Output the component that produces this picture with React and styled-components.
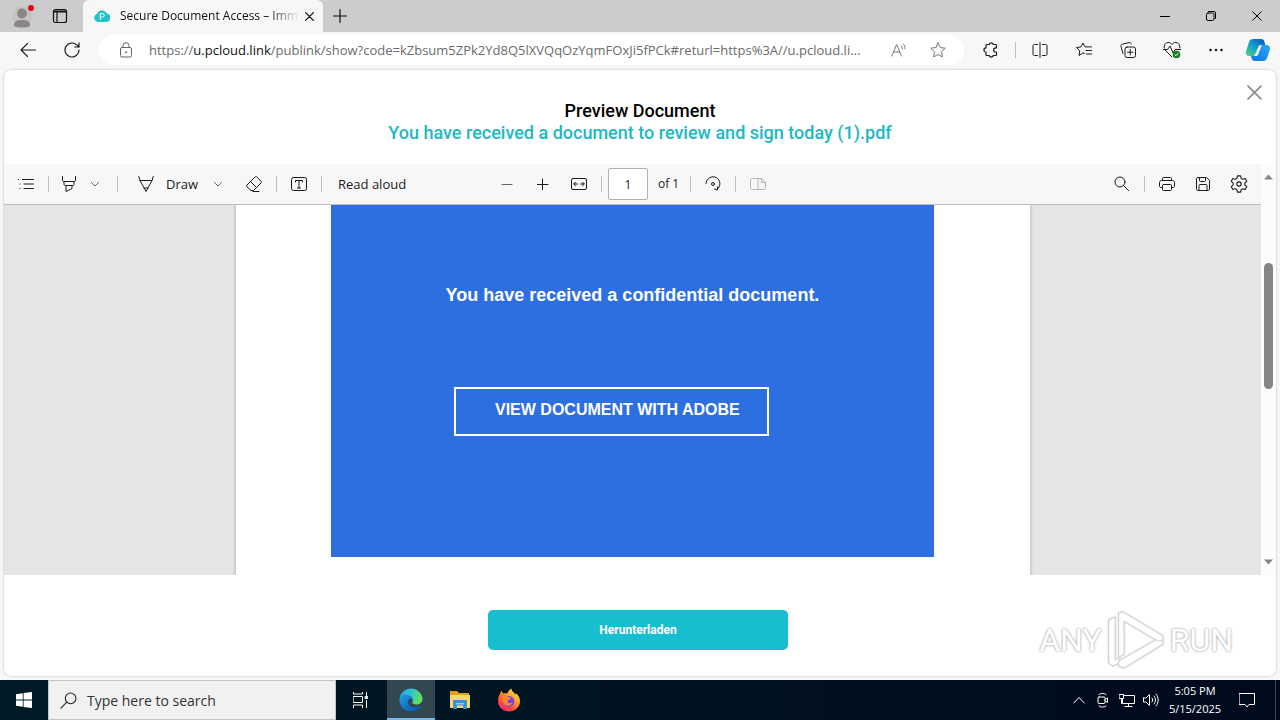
import React, { useState } from 'react';
import styled, { createGlobalStyle } from 'styled-components';

const ui = '"Open Sans", "Noto Sans", sans-serif';

const GlobalStyle = createGlobalStyle`
  * {
    box-sizing: border-box;
  }

  body {
    margin: 0;
    font-family: ${ui};
  }

  button, input {
    font-family: inherit;
    color: inherit;
    margin: 0;
  }

  button {
    border: 0;
    padding: 0;
    background: none;
  }
`;

const Screen = styled.div`
  min-height: 100vh;
  display: flex;
  flex-direction: column;
  background: #f7f7f7;
  color: #1b1b1b;
`;

const TitleBar = styled.header`
  height: 32px;
  display: flex;
  background: #cccccc;
`;

const IconButton = styled.button`
  width: ${(props) => props.$w || 32}px;
  height: ${(props) => props.$h || 32}px;
  flex: none;
  display: flex;
  align-items: center;
  justify-content: center;
`;

const Tools = styled.div`
  width: 83px;
  padding-left: 3px;
  display: flex;
`;

const Tab = styled.div`
  width: 240px;
  display: flex;
  align-items: center;
  padding: 0 10px 0 11px;
  background: #f7f7f7;
  border-radius: 6px 6px 0 0;
`;

const TabTitle = styled.span`
  flex: 1;
  margin-left: 10px;
  white-space: nowrap;
  font-size: 12px;
  line-height: 16px;
  color: #111111;
  mask-image: linear-gradient(90deg, #000 80%, transparent 97%);
`;

const WindowControls = styled.div`
  margin-left: auto;
  display: flex;
`;

const NavBar = styled.nav`
  height: 38px;
  padding: 0 2px 2px 6px;
  display: flex;
  align-items: center;
`;

const Address = styled.div`
  flex: 1;
  min-width: 0;
  height: 30px;
  margin: 0 5px;
  padding: 0 6px 0 19px;
  display: flex;
  align-items: center;
  border-radius: 15px;
  background: #ffffff;
`;

const Url = styled.a`
  flex: 1;
  min-width: 0;
  margin-left: 15px;
  overflow: hidden;
  white-space: nowrap;
  text-overflow: ellipsis;
  font-size: 13px;
  line-height: 20px;
  color: #6b6b6b;
  text-decoration: none;
`;

const Host = styled.span`
  color: #111111;
`;

const Divider = styled.span`
  width: 1px;
  height: 16px;
  flex: none;
  margin: 0 ${(props) => props.$after ?? 6}px 0 ${(props) => props.$before ?? 6}px;
  background: #bdbdbd;
`;

const Card = styled.main`
  flex: 1;
  margin: 0 4px 4px;
  display: flex;
  flex-direction: column;
  position: relative;
  background: #ffffff;
  border-radius: 8px;
  box-shadow: 0 0 2px 1px #dcdcdc;
`;

const CardHeader = styled.div`
  padding: 30px 60px 20px;
  text-align: center;
  font-family: Roboto, sans-serif;
  font-weight: 500;
`;

const Title = styled.h1`
  margin: 0;
  font-size: 18px;
  line-height: 22px;
  font-weight: inherit;
  color: ${(props) => props.$accent ? '#20b8c5' : '#000000'};
`;

const CloseButton = styled(IconButton)`
  position: absolute;
  top: 6px;
  right: 6px;
`;

const Viewer = styled.section`
  flex: 1;
  display: flex;
`;

const Pdf = styled.div`
  flex: 1;
  min-width: 0;
  display: flex;
  flex-direction: column;
`;

const PdfToolbar = styled.div`
  height: 41px;
  padding: 0 6px;
  display: grid;
  grid-template-columns: 1fr auto 1fr;
  align-items: center;
  background: #f7f7f7;
  border-bottom: 1px solid #bcbcbc;
  font-size: 13px;
  line-height: 20px;
`;

const Group = styled.div`
  display: flex;
  align-items: center;
  justify-content: ${(props) => props.$end ? 'flex-end' : 'flex-start'};
`;

const Spaced = styled(Group)`
  gap: 4px;
`;

const DrawTools = styled(Group)`
  gap: 8px;
`;

const TextButton = styled.button`
  display: flex;
  align-items: center;
  white-space: nowrap;
  font-size: 13px;
  line-height: 20px;
`;

const ReadAloud = styled(TextButton)`
  padding-left: 10px;
`;

const DrawLabel = styled.span`
  width: 44px;
  padding-left: 4px;
  text-align: left;
`;

const PageInput = styled.input`
  width: 40px;
  height: 32px;
  padding: 0;
  text-align: center;
  border: 1px solid #b0b0b0;
  border-radius: 2px;
  background: #ffffff;
  font-size: 12px;
`;

const PageCount = styled.span`
  width: 36px;
  padding-left: 10px;
  white-space: nowrap;
  font-size: 12px;
`;

const Canvas = styled.div`
  flex: 1;
  display: flex;
  justify-content: center;
  background: #e5e5e5;
`;

const Page = styled.div`
  width: 794px;
  display: flex;
  justify-content: center;
  align-items: flex-start;
  padding-bottom: 18px;
  background: #ffffff;
  box-shadow: 0 0 3px 1px #bbbbbb;
  clip-path: inset(0 -4px);
`;

const Notice = styled.div`
  width: 603px;
  height: 352px;
  padding-top: 78px;
  background: #2d6fe1;
  color: #ffffff;
  font-family: "Liberation Sans", Arial, sans-serif;
  font-weight: 700;
`;

const NoticeText = styled.p`
  margin: 0 0 80px;
  text-align: center;
  font-size: 18px;
  line-height: 24px;
`;

const ViewButton = styled.button`
  width: 315px;
  height: 49px;
  margin-left: 123px;
  padding: 0 0 4px 39px;
  text-align: left;
  border: 2px solid #ffffff;
  font-size: 16px;
  font-weight: 700;
`;

const Scrollbar = styled.div`
  width: 15px;
  padding: 9px 0;
  display: flex;
  flex-direction: column;
  align-items: center;
  background: #fcfcfc;
`;

const Track = styled.div`
  flex: 1;
  width: 9px;
  margin: 2px 0;
  display: grid;
  grid-template-rows: 79fr 127fr 167fr;
`;

const Thumb = styled.div`
  grid-row: 2;
  border-radius: 5px;
  background: #858585;
`;

const CardFooter = styled.div`
  padding: 35px 4px 26px 0;
  display: flex;
  justify-content: center;
`;

const DownloadButton = styled.button`
  width: 300px;
  height: 40px;
  border-radius: 5px;
  background: #17bed0;
  color: #ffffff;
  font-family: Roboto, sans-serif;
  font-size: 12px;
  font-weight: 700;
`;

const Watermark = styled.div`
  position: absolute;
  right: 43px;
  bottom: 4px;
  display: flex;
  align-items: center;
  gap: 4px;
  color: #ffffff;
  font-family: Roboto, sans-serif;
  font-size: 32px;
  line-height: 64px;
  text-shadow: 0 0 2px #a8a8a8, 0 0 3px #bdbdbd;
`;

const Taskbar = styled.footer`
  height: 40px;
  display: flex;
  background: linear-gradient(90deg, #001b25, #000a1c);
  color: #ffffff;
`;

const TaskSearch = styled.label`
  width: 288px;
  height: 40px;
  display: flex;
  align-items: center;
  padding-left: 11px;
  border: 1px solid #c4c4c4;
  background: #f1f1f1;
  color: #222222;
`;

const SearchInput = styled.input`
  flex: 1;
  min-width: 0;
  margin-left: 10px;
  padding: 0;
  border: 0;
  background: none;
  font-size: 14px;

  &::placeholder {
    color: #333333;
    opacity: 1;
  }
`;

const Apps = styled.div`
  display: flex;
  gap: 1px;
`;

const AppButton = styled(IconButton)`
  background: ${(props) => props.$active ? '#32474f' : 'none'};
  box-shadow: ${(props) => props.$active ? 'inset 0 -2px #76b9ed' : 'none'};
`;

const Tray = styled.div`
  margin-left: auto;
  display: flex;
`;

const Clock = styled.time`
  width: 64px;
  padding-top: 2px;
  text-align: center;
  font-size: 11px;
  line-height: 18px;
`;

const ShowDesktop = styled.button`
  width: 5px;
  margin-left: 8px;
  border-left: 1px solid #3c4653;
`;

const Svg = styled.svg`
  flex: none;
  display: block;
  fill: none;
  stroke: currentColor;
  stroke-linecap: round;
  stroke-linejoin: round;
`;

const Icon = ({ size = 16, box = 16, color, line = 1, children }) => (
  <Svg width={size} height={size} viewBox={`0 0 ${box} ${box}`} color={color} strokeWidth={line} aria-hidden="true">
    {children}
  </Svg>
);

const Close = ({ size, color, line }) => (
  <Icon size={size} box={10} color={color} line={line}><path d="M.7.7l8.6 8.6M9.3.7L.7 9.3" /></Icon>
);

const Chevron = () => (
  <Icon size={8} box={8} color="#666"><path d="M.5 2.5L4 6l3.5-3.5" /></Icon>
);

const starPath = 'M8 .8l2.2 4.7 5 .7-3.7 3.6.9 5.1L8 12.5l-4.4 2.4.9-5.1L.8 6.2l5-.7z';

const Magnifier = ({ size, flip }) => (
  <Icon size={size}>{flip
    ? <><circle cx="10" cy="6" r="5" /><path d="M6.4 9.6L.8 15.2" /></>
    : <><circle cx="6" cy="6" r="5" /><path d="M9.700 9.700l5 5" /></>}
  </Icon>
);

const ProfileIcon = () => (
  <Icon size={24} box={24}>
    <g stroke="none">
      <circle cx="12" cy="12" r="10" fill="#c6c3c2" />
      <circle cx="12" cy="9.500" r="5" fill="#8b8786" />
      <path d="M4 22c-.5-5 3-6 8-6s8.500 1 8 6c-3 2-13 2-16 0z" fill="#8b8786" />
      <circle cx="21" cy="4" r="3" fill="#e60012" />
    </g>
  </Icon>
);

const CloudIcon = () => (
  <Icon size={16}>
    <path d="M4 13.500a3.700 3.700 0 0 1-.8-7.200A5 5 0 0 1 12.600 5.900 3.800 3.800 0 0 1 12 13.500z" fill="#20c3cb" stroke="#20c3cb" />
    <path d="M6.300 11.500V5.500h2.200a1.700 1.700 0 0 1 0 3.500H6.300" stroke="#fff" />
  </Icon>
);

const CopilotIcon = () => (
  <Icon size={26} box={26}>
    <defs>
      <linearGradient id="copilotA" x1="0" y1="1" x2="1" y2="0">
        <stop offset="0" stopColor="#59d36b" />
        <stop offset=".45" stopColor="#12a5c9" />
        <stop offset="1" stopColor="#0a4cc4" />
      </linearGradient>
      <linearGradient id="copilotB" x1="0" y1="1" x2="1" y2="0">
        <stop offset="0" stopColor="#0875e8" />
        <stop offset="1" stopColor="#2ea7f5" />
      </linearGradient>
    </defs>
    <g stroke="none">
      <path d="M8 2h8c2 0 3 1 3.500 3l.7 3h-3c-2 0-3 1-3.600 3l-1.600 5c-.6 2-1.500 3-3.500 3H4c-2.500 0-3.500-2-3-4.500L4 5c.7-2 2-3 4-3z" fill="url(#copilotA)" />
      <path d="M17.500 8H21c3 0 4.500 1.700 4 4.500L22 21c-.7 2-2 3-4 3h-8c-2 0-3-1-3.500-3L6 19h2.500c2 0 3-1 3.500-3l2-5c.6-2 1.500-3 3.500-3z" fill="url(#copilotB)" />
      <path d="M14 8.500h3l-1 1.500-3 8-1.500 1H9l1.200-2z" fill="#f5fbff" />
    </g>
  </Icon>
);

const EdgeIcon = () => (
  <Icon size={24} box={24}>
    <defs>
      <linearGradient id="edgeTop" x1="0" y1="0" x2="1" y2=".3">
        <stop offset="0" stopColor="#249ee6" />
        <stop offset=".55" stopColor="#30c4ce" />
        <stop offset="1" stopColor="#62df58" />
      </linearGradient>
      <linearGradient id="edgeBottom" x1="0" y1="0" x2="1" y2="1">
        <stop offset="0" stopColor="#1b9de2" />
        <stop offset="1" stopColor="#0c50a5" />
      </linearGradient>
    </defs>
    <g stroke="none">
      <path d="M.5 11C1 5 6 .5 12 .5S23.500 5.500 23.500 11c0 3.500-3 5.500-6 5.500-3 0-4.500-1.200-4.300-2.300C14.500 12.800 14 9 9.500 8 5 7.500 1 9 .5 11z" fill="url(#edgeTop)" />
      <path d="M.5 12C.5 8.500 4 6.500 8 6.800c4 .4 6.500 3.200 6 6-.5-1.500-2-2.300-3.500-1.800-3 1.300-2.500 7 3 8 3 .6 6-.2 8.300-1.600C20 21.500 16 23.500 12 23.500 5.500 23.500.5 18.500.5 12z" fill="url(#edgeBottom)" />
    </g>
  </Icon>
);

const ExplorerIcon = () => (
  <Icon size={22} box={22}>
    <g stroke="none">
      <path d="M1 2h7l2 2h10v5H1z" fill="#e0a21c" />
      <path d="M1 6h20v13H1z" fill="#ffd766" />
      <path d="M4 12.500c0-1 .6-1.500 1.500-1.500h11c1 0 1.500.5 1.500 1.500V20h-4v-3.500H8V20H4z" fill="#3c93d2" />
      <path d="M7 14h8v1.500H7z" fill="#8ec9ec" />
    </g>
  </Icon>
);

const FirefoxIcon = () => (
  <Icon size={24} box={24}>
    <defs>
      <linearGradient id="foxBody" x1=".9" y1="0" x2=".2" y2="1">
        <stop offset="0" stopColor="#fff04a" />
        <stop offset=".4" stopColor="#ffa026" />
        <stop offset=".75" stopColor="#ff4540" />
        <stop offset="1" stopColor="#e8208a" />
      </linearGradient>
    </defs>
    <g stroke="none">
      <path d="M3 6c.3-1.500 1-2.500 1.800-3.200.1 1.200.6 2 1.200 2.600C7.500 5 9 5.100 10.200 5.500 11 3.500 12.500 1.500 14.500.5c0 2 1 3 2.500 4.200.8.700 1 1.300 1.300 2 .4-.5.500-1 .4-1.700C21.500 7 23 10 23 13c0 6-5 10.500-11 10.500S1 19 1 13c0-2.800.7-5 2-7z" fill="url(#foxBody)" />
      <circle cx="12" cy="13.500" r="5.400" fill="#7542e5" />
      <path d="M5.500 8.500c2-1.200 4-.8 5.500.5l3 .7c-.3 1.500-1.800 1.800-3 2.500-1 .7-.7 1.500-.2 2.200 1.500 1.500 3.500.6 5 .2-1 2.500-3.500 3.600-5.800 3C6.500 16.800 5 13 5.500 8.500z" fill="#ff8a24" />
    </g>
  </Icon>
);

const PlayLogo = () => (
  <Icon size={60} box={60} color="#cfcfcf">
    <g fill="#fff" stroke="#e8e8e8" strokeWidth="3">
      <path d="M13 3l4-1 40 24v4l-5 1-34-20v33l-5 3z" />
      <path d="M3 10l6-3v43l4-2v5l-6 3-4-3z" />
      <path d="M13 51l40-23 4 2v4L18 58l-5-2z" />
    </g>
    <g fill="#fff" strokeWidth="1">
      <path d="M3 10l6-3v43l4-2v5l-6 3-4-3z" />
      <path d="M13 51l40-23 4 2v4L18 58l-5-2z" />
      <path d="M13 3l4-1 40 24v4l-5 1-34-20v33l-5 3z" />
    </g>
  </Icon>
);

const App = () => {
  const [page, setPage] = useState('1');

  return (
    <Screen>
      <GlobalStyle />
      <TitleBar>
        <Tools>
          <IconButton $w={38} aria-label="Profile"><ProfileIcon /></IconButton>
          <IconButton $w={38} aria-label="Workspaces">
            <Icon color="#111" line={1.2}>
              <rect x="1.500" y="1.500" width="13" height="13" rx="2" />
              <path d="M1.500 4h13M5 4v10.500M2 3h12" />
            </Icon>
          </IconButton>
        </Tools>
        <Tab>
          <CloudIcon />
          <TabTitle>Secure Document Access – Imme</TabTitle>
          <IconButton $w={10} aria-label="Close tab"><Close size={9} line={1.4} color="#111" /></IconButton>
        </Tab>
        <IconButton $w={34} aria-label="New tab">
          <Icon size={14} box={14} color="#111" line={1.2}><path d="M7 .5v13M.5 7h13" /></Icon>
        </IconButton>
        <WindowControls>
          <IconButton $w={46} aria-label="Minimize"><Icon size={10} box={10} color="#000"><path d="M0 5.500h10" /></Icon></IconButton>
          <IconButton $w={46} aria-label="Restore">
            <Icon size={10} box={10} color="#000">
              <rect x=".5" y="2" width="7.500" height="7.500" rx="1.500" />
              <path d="M2.500.5H8A1.500 1.500 0 0 1 9.500 2v5.500" />
            </Icon>
          </IconButton>
          <IconButton $w={46} aria-label="Close"><Close size={10} color="#000" /></IconButton>
        </WindowControls>
      </TitleBar>

      <NavBar>
        <IconButton $w={44} aria-label="Back"><Icon line={1.1}><path d="M15.500 8H1M7.500 1.500L1 8l6.500 6.500" /></Icon></IconButton>
        <IconButton $w={44} aria-label="Refresh"><Icon line={1.2}><path d="M15 8a7 7 0 1 1-2.200-5.100L15 5M15 .8V5h-4.200" /></Icon></IconButton>
        <Address>
          <Icon color="#666">
            <rect x="2.500" y="5.500" width="11" height="9.500" rx="1.500" />
            <path d="M5 5.500V3.700a3 3 0 0 1 6 0v1.800" />
            <circle cx="8" cy="10.300" r=".6" fill="currentColor" />
          </Icon>
          <Url href="#">https://<Host>u.pcloud.link</Host>/publink/show?code=kZbsum5ZPk2Yd8Q5lXVQqOzYqmFOxJi5fPCk#returl=https%3A//u.pcloud.li...</Url>
          <IconButton $w={38} aria-label="Read aloud page">
            <Icon color="#777"><path d="M.8 14L5.600 2.500 10.400 14M2.500 10h6.200M10 3.500c1 .7 1.400 2 1.300 3.300M12 1.800c1.500 1.200 2 3 2 5" /></Icon>
          </IconButton>
          <IconButton $w={40} aria-label="Add to favorites"><Icon color="#777"><path d={starPath} /></Icon></IconButton>
        </Address>
        <IconButton $w={44} aria-label="Extensions">
          <Icon line={1.2}><path d="M4 2.500h2.300a2 2 0 0 1 3.900 0h2.300c.6 0 1 .4 1 1v2.300h-.8a2.100 2.100 0 0 0 0 4.200h.8v2.500c0 .6-.4 1-1 1h-2.300a2 2 0 0 1-3.900 0H4c-.6 0-1-.4-1-1V10a2.100 2.100 0 0 1 0-4.200V3.500c0-.6.400-1 1-1z" /></Icon>
        </IconButton>
        <Divider $before={2} $after={2} />
        <IconButton $w={44} aria-label="Split screen">
          <Icon><path d="M8 .5v15M5.500 2.500h-3C1.500 2.500 1 3 1 4v8c0 1 .5 1.500 1.500 1.500h3M10.500 2.500h3c1 0 1.500.5 1.500 1.500v8c0 1-.5 1.500-1.500 1.500h-3" /></Icon>
        </IconButton>
        <IconButton $w={44} aria-label="Favorites">
          <Icon><path d="M8.500 11.500L7 10.800l-4 2.700.8-4.700L.5 5.600l4.500-.7L7 1l2 3.900h6.500M10 8.500h5.500M10.500 12h5" /></Icon>
        </IconButton>
        <IconButton $w={44} aria-label="Collections">
          <Icon>
            <rect x="5" y="5" width="10.500" height="10.500" rx="2" />
            <path d="M10.250 7.500v5.500M7.500 10.250H13M3 11.500l-2-7C.7 3.300 1.200 2.500 2.300 2.200L9 .6c1.200-.3 2 .2 2.300 1.400" />
          </Icon>
        </IconButton>
        <IconButton $w={44} aria-label="Browser essentials">
          <Icon size={18} box={18}>
            <path d="M9 16L2 9M1.200 7C.2 2 6-.8 9 3.500 12-.8 17.800 2 16.800 7M.5 8.500h4L7 5l3 7 2-3.500h5.500" />
            <circle cx="13.500" cy="13.500" r="3.800" fill="#15801c" stroke="none" />
            <path d="M12 13.700l1 1 2-2.300" stroke="#fff" />
          </Icon>
        </IconButton>
        <IconButton $w={44} aria-label="Settings and more">
          <Icon><g fill="currentColor" stroke="none"><circle cx="2.500" cy="8" r="1.300" /><circle cx="8" cy="8" r="1.300" /><circle cx="13.500" cy="8" r="1.300" /></g></Icon>
        </IconButton>
        <IconButton $w={40} aria-label="Copilot"><CopilotIcon /></IconButton>
      </NavBar>

      <Card>
        <CardHeader>
          <Title>Preview Document</Title>
          <Title as="h2" $accent>You have received a document to review and sign today (1).pdf</Title>
        </CardHeader>
        <CloseButton aria-label="Close preview"><Close size={15} line={1.2} color="#8f8f8f" /></CloseButton>

        <Viewer>
          <Pdf>
            <PdfToolbar>
              <Group>
                <IconButton aria-label="Table of contents"><Icon><path d="M.5 3.500h.1M4.500 3.500h11M2 8h.1M6 8h9.500M2 12.500h.1M6 12.500h9.500" /></Icon></IconButton>
                <Divider />
                <IconButton $w={28} aria-label="Highlight">
                  <Icon><path d="M1.500.5V4c0 1 .5 1.500 1.500 1.500h10c1 0 1.500-.5 1.500-1.500V.5M3 5.500V8c0 1 .5 1.500 1.500 1.500h7c1 0 1.500-.5 1.500-1.500V5.500M5 9.500v6l6-3v-3" /></Icon>
                </IconButton>
                <IconButton $w={24} aria-label="Highlight colors"><Chevron /></IconButton>
                <Divider $before={10} $after={12} />
                <DrawTools>
                  <Group>
                    <TextButton>
                      <IconButton as="span"><Icon><path d="M.8.5L2 4.500l6 11 6-11L15.200.5M2 4.500h12M6 12h4" /></Icon></IconButton>
                      <DrawLabel>Draw</DrawLabel>
                    </TextButton>
                    <IconButton $w={24} aria-label="Draw options"><Chevron /></IconButton>
                  </Group>
                  <IconButton aria-label="Erase"><Icon><path d="M1 9l8-8c.6-.6 1.200-.6 1.800 0L15 5.200c.6.6.6 1.200 0 1.800l-7.500 7.500H5L1 10.800c-.6-.6-.6-1.200 0-1.800zM4.500 5.500l6 6M7 15.500h6" /></Icon></IconButton>
                </DrawTools>
                <Divider />
                <IconButton aria-label="Add text">
                  <Icon><rect x=".5" y="1.500" width="15" height="13" rx="2" /><path d="M4.500 6V4.500h7V6M8 4.500v7.500M6.500 12h3" /></Icon>
                </IconButton>
                <Divider />
                <ReadAloud>Read aloud</ReadAloud>
              </Group>
              <Group>
                <Spaced>
                  <IconButton aria-label="Zoom out"><Icon size={12} box={12} color="#666"><path d="M1 6.500h10" /></Icon></IconButton>
                  <IconButton aria-label="Zoom in"><Icon size={12} box={12}><path d="M5.500 1v11M0 6.500h11" /></Icon></IconButton>
                  <IconButton aria-label="Fit to width">
                    <Icon><rect x=".5" y="2.500" width="15" height="11" rx="1.500" /><path d="M3 8h3.500M9.500 8H13M4.500 6.200L2.700 8l1.800 1.800M11.500 6.200L13.300 8l-1.800 1.800" /></Icon>
                  </IconButton>
                </Spaced>
                <Divider />
                <PageInput aria-label="Page number" value={page} onChange={(e) => setPage(e.target.value)} />
                <PageCount>of 1</PageCount>
                <Divider />
                <IconButton aria-label="Rotate"><Icon><path d="M1 7.500a7 7 0 1 1 11 6M9.500 13l2.800 1 .4-3.200" /><circle cx="8" cy="8" r="1.500" /></Icon></IconButton>
                <Divider />
                <IconButton aria-label="Page view">
                  <Icon color="#b5b5b5"><path d="M7.500 2.500h-6c-.6 0-1 .4-1 1v9c0 .6.400 1 1 1h6zM7.500 2.500h4l4 4v6c0 .6-.4 1-1 1h-7M11.500 2.500v4h4" /></Icon>
                </IconButton>
              </Group>
              <Group $end>
                <IconButton aria-label="Find"><Magnifier size={16} /></IconButton>
                <Divider />
                <Spaced>
                  <IconButton aria-label="Print">
                    <Icon><path d="M3.500 11.500H2c-.8 0-1.500-.6-1.500-1.500V6.500C.5 5.500 1.500 4.500 2.500 4.500h11c1 0 2 1 2 2V10c0 .9-.7 1.500-1.500 1.500h-1.500M3.500 4.500v-2c0-.6.400-1 1-1h7c.6 0 1 .4 1 1v2" /><rect x="3.500" y="8.500" width="9" height="6" rx="1" /></Icon>
                  </IconButton>
                  <IconButton aria-label="Save">
                    <Icon><path d="M3 1.500h8.500l3 3V13c0 .8-.7 1.500-1.500 1.500H3c-.8 0-1.500-.7-1.500-1.500V3c0-.8.700-1.500 1.500-1.500zM4.500 1.500v3c0 .6.400 1 1 1h4c.6 0 1-.4 1-1v-3M4 14.500v-5c0-.6.400-1 1-1h6c.6 0 1 .4 1 1v5" /></Icon>
                  </IconButton>
                  <IconButton aria-label="PDF settings">
                    <Icon size={18}><path d="M6.600.8h2.800l.5 2.200 1.300.8 2.200-.7 1.500 2.500L13.200 7.200v1.600l1.700 1.600-1.500 2.500-2.200-.7-1.300.8-.5 2.200H6.600L6.100 13l-1.300-.8-2.200.7-1.500-2.500 1.700-1.600V7.200L1.100 5.600l1.500-2.500 2.200.7L6.100 3z" /><circle cx="8" cy="8" r="1.900" /></Icon>
                  </IconButton>
                </Spaced>
              </Group>
            </PdfToolbar>
            <Canvas>
              <Page>
                <Notice>
                  <NoticeText>You have received a confidential document.</NoticeText>
                  <ViewButton>VIEW DOCUMENT WITH ADOBE</ViewButton>
                </Notice>
              </Page>
            </Canvas>
          </Pdf>
          <Scrollbar>
            <Icon size={9} box={9}><path d="M0 6.500l4.500-5 4.500 5z" fill="#858585" stroke="none" /></Icon>
            <Track><Thumb /></Track>
            <Icon size={9} box={9}><path d="M0 2.500l4.500 5 4.500-5z" fill="#858585" stroke="none" /></Icon>
          </Scrollbar>
        </Viewer>

        <CardFooter>
          <DownloadButton>Herunterladen</DownloadButton>
        </CardFooter>
        <Watermark>
          <span>ANY</span>
          <PlayLogo />
          <span>RUN</span>
        </Watermark>
      </Card>

      <Taskbar>
        <IconButton $w={48} $h={40} aria-label="Start">
          <Icon><g fill="#fff" stroke="none"><path d="M0 2.200L6.800 1.200v6.400H0zM7.600 1.100L16 0v7.600H7.600zM0 8.400h6.800v6.400L0 13.800zM7.600 8.400H16V16l-8.400-1.100z" /></g></Icon>
        </IconButton>
        <TaskSearch>
          <Magnifier size={17} flip />
          <SearchInput placeholder="Type here to search" aria-label="Type here to search" />
        </TaskSearch>
        <Apps>
          <AppButton $w={50} $h={40} aria-label="Task view">
            <Icon><path d="M.5.5V2h9V.5M.5 4.500h9v6h-9zM.5 15.500V13h9v2.500M13.500.5v3M13.500 8.500v7" /><path d="M12.500 4.500h2v2h-2z" fill="#fff" /></Icon>
          </AppButton>
          <AppButton $w={48} $h={40} $active aria-label="Microsoft Edge"><EdgeIcon /></AppButton>
          <AppButton $w={48} $h={40} aria-label="File Explorer"><ExplorerIcon /></AppButton>
          <AppButton $w={48} $h={40} aria-label="Firefox"><FirefoxIcon /></AppButton>
        </Apps>
        <Tray>
          <IconButton $w={24} $h={40} aria-label="Show hidden icons"><Icon size={12} box={12}><path d="M.8 9L6 3.500 11.200 9" /></Icon></IconButton>
          <IconButton $w={24} $h={40} aria-label="Meet now">
            <Icon><rect x="3" y="5" width="7" height="6.500" rx="1" /><path d="M10 7.500l2.500-1.500v4.500L10 9M4 2.500c2-1.500 5-1.500 7 0M4 14c2 1.500 5 1.500 7 0" /></Icon>
          </IconButton>
          <IconButton $w={24} $h={40} aria-label="Network">
            <Icon><path d="M5.500 3.500h10v8h-12v-5M9.500 11.500v3M6 14.500h7M.5 2.500h4v4h-4zM2.500 6.500v5" /></Icon>
          </IconButton>
          <IconButton $w={24} $h={40} aria-label="Volume">
            <Icon><path d="M.5 6v4H3l3.500 3.500v-11L3 6zM9 6c1 1.200 1 2.800 0 4M11 4c2 2.200 2 5.800 0 8M13 2.200c3 3.300 3 8.300 0 11.600" /></Icon>
          </IconButton>
          <Clock>5:05 PM<br />5/15/2025</Clock>
          <IconButton $w={40} $h={40} aria-label="Notifications">
            <Icon><path d="M.5 1.500h15v11H10l-2 2.500-2-2.500H.5z" /></Icon>
          </IconButton>
          <ShowDesktop aria-label="Show desktop" />
        </Tray>
      </Taskbar>
    </Screen>
  );
};

export default App;
